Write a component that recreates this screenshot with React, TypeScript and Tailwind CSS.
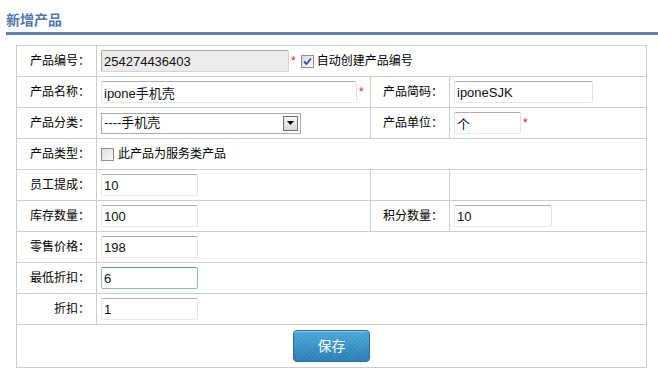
import clsx from 'clsx';

const TextBox = ({
  value,
  w,
  gray = false,
  focus = false,
}: {
  value: string;
  w: string;
  gray?: boolean;
  focus?: boolean;
}) => (
  <input
    readOnly
    value={value}
    className={clsx(
      'h-[22px] rounded-[2px] border px-[2px] align-middle text-[13px] text-[#111] outline-none',
      w,
      gray
        ? 'bg-[#ebebeb] border-[#a9a9a9] border-b-[#d4d4d4] border-r-[#d4d4d4]'
        : focus
          ? 'bg-white border-[#8fb8dc] border-t-[#5d8fbf]'
          : 'bg-white border-[#e2e3ea] border-t-[#abadb3] border-b-[#e3e9ef]'
    )}
  />
);

const Star = () => (
  <span className="ml-[2px] align-top text-[12px] leading-[14px] text-[#e02020]">*</span>
);

const CheckBox = ({ checked }: { checked?: boolean }) => (
  <span className="inline-flex h-[13px] w-[13px] items-center justify-center border border-[#8f8f8f] bg-[linear-gradient(135deg,#dcdcdc,#fafafa)] align-middle">
    {checked && (
      <svg width="9" height="9" viewBox="0 0 9 9">
        <path d="M1 4.5 L3.5 7 L8 1.5" fill="none" stroke="#2a4cae" strokeWidth="1.8" />
      </svg>
    )}
  </span>
);

const Label = ({ children }: { children?: React.ReactNode }) => (
  <td className="border border-[#cccccc] pr-[6px] text-right text-[12px] text-black">{children}</td>
);

const Cell = ({ children, span }: { children?: React.ReactNode; span?: number }) => (
  <td colSpan={span} className="border border-[#cccccc] pl-[4px]">
    {children}
  </td>
);

const App = () => {
  return (
    <div className="h-[390px] w-[658px] overflow-hidden bg-white font-['Liberation_Sans','Noto_Sans_CJK_SC',sans-serif] text-[12px]">
      <div className="pl-[6px] pt-[8px]">
        <h2 className="text-[14px] font-bold leading-[24px] text-[#4f77b3]">新增产品</h2>
        <div className="h-[3px] bg-[#5b7fb7]" />
      </div>
      <div className="pl-[16px] pt-[10px]">
        <table className="w-[630px] table-fixed border-collapse">
          <colgroup>
            <col className="w-[80px]" />
            <col className="w-[274px]" />
            <col className="w-[79px]" />
            <col className="w-[197px]" />
          </colgroup>
          <tbody>
            <tr className="h-[31px]">
              <Label>产品编号：</Label>
              <Cell span={3}>
                <div className="flex items-center">
                  <TextBox value="254274436403" w="w-[188px]" gray />
                  <Star />
                  <span className="ml-[5px]">
                    <CheckBox checked />
                  </span>
                  <span className="ml-[3px] text-black">自动创建产品编号</span>
                </div>
              </Cell>
            </tr>
            <tr className="h-[31px]">
              <Label>产品名称：</Label>
              <Cell>
                <div className="flex items-center">
                  <TextBox value="ipone手机壳" w="w-[256px]" />
                  <Star />
                </div>
              </Cell>
              <Label>产品简码：</Label>
              <Cell>
                <TextBox value="iponeSJK" w="w-[139px]" />
              </Cell>
            </tr>
            <tr className="h-[31px]">
              <Label>产品分类：</Label>
              <Cell>
                <div className="flex h-[21px] w-[200px] items-center border border-[#a5acb5] bg-white">
                  <span className="flex-1 pl-[2px] text-[13px] text-[#111]">----手机壳</span>
                  <span className="mr-[2px] flex h-[15px] w-[15px] items-center justify-center border border-[#707070] bg-[linear-gradient(#f4f4f4,#d8d8d8)]">
                    <svg width="7" height="4" viewBox="0 0 7 4">
                      <path d="M0 0 H7 L3.5 4 Z" fill="#000" />
                    </svg>
                  </span>
                </div>
              </Cell>
              <Label>产品单位：</Label>
              <Cell>
                <div className="flex items-center">
                  <TextBox value="个" w="w-[67px]" />
                  <Star />
                </div>
              </Cell>
            </tr>
            <tr className="h-[31px]">
              <Label>产品类型：</Label>
              <Cell span={3}>
                <div className="flex items-center">
                  <CheckBox />
                  <span className="ml-[4px] text-black">此产品为服务类产品</span>
                </div>
              </Cell>
            </tr>
            <tr className="h-[31px]">
              <Label>员工提成：</Label>
              <Cell>
                <TextBox value="10" w="w-[97px]" />
              </Cell>
              <Label />
              <Cell />
            </tr>
            <tr className="h-[31px]">
              <Label>库存数量：</Label>
              <Cell>
                <TextBox value="100" w="w-[97px]" />
              </Cell>
              <Label>积分数量：</Label>
              <Cell>
                <TextBox value="10" w="w-[98px]" />
              </Cell>
            </tr>
            <tr className="h-[31px]">
              <Label>零售价格：</Label>
              <Cell span={3}>
                <TextBox value="198" w="w-[97px]" />
              </Cell>
            </tr>
            <tr className="h-[31px]">
              <Label>最低折扣：</Label>
              <Cell span={3}>
                <TextBox value="6" w="w-[97px]" focus />
              </Cell>
            </tr>
            <tr className="h-[31px]">
              <Label>折扣：</Label>
              <Cell span={3}>
                <TextBox value="1" w="w-[97px]" />
              </Cell>
            </tr>
            <tr className="h-[43px]">
              <td colSpan={4} className="border border-[#cccccc] text-center">
                <button className="h-[32px] w-[77px] rounded-[4px] border border-[#2a6a98] bg-[repeating-linear-gradient(135deg,rgba(255,255,255,0.07)_0_1px,transparent_1px_3px),linear-gradient(#48a6da,#2a7db6)] align-middle text-[14px] text-white shadow-[inset_0_1px_0_rgba(255,255,255,0.35)]">
                  保存
                </button>
              </td>
            </tr>
          </tbody>
        </table>
      </div>
    </div>
  );
};

export default App;
